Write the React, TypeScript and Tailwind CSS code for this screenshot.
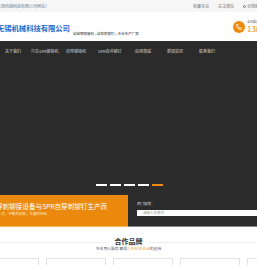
import { Phone } from "lucide-react"

const navItems = ["关于我们", "汽车SPR铆接机", "自穿铆接机", "SPR自冲铆钉", "应用领域", "新闻资讯", "联系我们"]

export default function App() {
  return (
    <div className="w-[257px] h-[265px] overflow-hidden bg-white font-['Noto_Sans_CJK_SC',sans-serif]">
      {/* top bar */}
      <div className="h-[12px] bg-[#f6f6f6] flex items-center justify-between text-[4px] leading-none text-[#777] whitespace-nowrap">
        <span className="-ml-[3px]">无锡机械科技有限公司网站！</span>
        <div className="flex items-center gap-[9px] -mr-[14px]">
          <span>收藏本站</span>
          <span>关注微信</span>
          <span className="flex items-center gap-[1px]">
            <span className="w-[3px] h-[3px] rounded-full border-[0.6px] border-[#777]" />
            全国服务热线
          </span>
        </div>
      </div>

      {/* header */}
      <div className="h-[29px] flex items-center justify-between whitespace-nowrap">
        <div className="flex items-end gap-[3px] pt-[3px]">
          <span className="-ml-[3px] text-[7.4px] leading-none font-bold text-[#1c68cc] tracking-[-0.1px]">无锡机械科技有限公司</span>
          <span className="text-[3.5px] leading-none text-[#333] mb-[-4px]">自营钢铆接机—自穿刺铆钉—专业生产厂家</span>
        </div>
        <div className="flex items-center gap-[2px] -mr-[8px]">
          <div className="w-[12px] h-[12px] rounded-full bg-[#ee8a0c] flex items-center justify-center">
            <Phone className="w-[6px] h-[6px] text-white" strokeWidth={3} />
          </div>
          <div className="flex flex-col">
            <span className="text-[3px] leading-none text-[#666]">全国服务热线</span>
            <span className="text-[8px] leading-[9px] text-[#ee8a0c]">1380</span>
          </div>
        </div>
      </div>

      {/* nav + banner */}
      <div className="bg-[#2b2b2b]">
        <div className="h-[19px] flex items-center text-[4px] leading-none text-[#d8d8d8] whitespace-nowrap pl-[5px]">
          {navItems.map((item, i) => (
            <span
              key={item}
              className={
                i === 0 ? "w-[26px]" : i === 1 ? "w-[35px]" : i === 2 ? "w-[32px]" : i === 3 ? "w-[37px]" : "w-[32px]"
              }
            >
              {item}
            </span>
          ))}
        </div>
        <div className="h-[135px] bg-[#2c2c2c] flex items-end justify-center pb-[9px] pl-[1px]">
          <div className="flex gap-[3px]">
            <span className="w-[11px] h-[2px] bg-white" />
            <span className="w-[11px] h-[2px] bg-white" />
            <span className="w-[11px] h-[2px] bg-white" />
            <span className="w-[11px] h-[2px] bg-white" />
            <span className="w-[11px] h-[2px] bg-[#ee8a0c]" />
          </div>
        </div>
        <div className="h-[31px] flex bg-[#2b2b2b]">
          <div className="w-[128px] bg-[#ea890c] text-white whitespace-nowrap overflow-hidden flex flex-col pt-[7px]">
            <span className="-ml-[4px] text-[6.6px] leading-[9px]">穿刺铆接设备与SPR自穿刺铆钉生产商</span>
            <span className="-ml-[2px] text-[3.5px] leading-[5px] text-[#fde7c8]">人员，不断的创新，丰富的经验</span>
          </div>
          <div className="flex-1 pl-[9px] pt-[7px] flex flex-col">
            <span className="text-[3.5px] leading-none text-[#ddd]">热门搜索：</span>
            <div className="mt-[4px] h-[6px] bg-white flex items-center pl-[6px] text-[3.5px] leading-none text-[#999]">请输入关键词</div>
          </div>
        </div>
      </div>
      <div className="h-[1px] flex">
        <div className="w-[128px] bg-[#f3b55a]" />
        <div className="flex-1 bg-[#8a8a8a]" />
      </div>

      {/* partner brands */}
      <div className="relative h-[31px] flex flex-col items-center pt-[10px]">
        <div className="absolute left-0 right-0 top-[15px] h-[1px] bg-[#efefef]" />
        <span className="relative bg-white px-[6px] text-[7px] leading-[9px] font-bold text-[#333]">合作品牌</span>
        <span className="mt-[1px] text-[3.8px] leading-none text-[#555] whitespace-nowrap">
          多年用心服务 赢得<span className="text-[#e9a03a]">众多知名企业</span>的支持
        </span>
      </div>
      <div className="flex gap-[7px] -ml-[21px]">
        {[0, 1, 2, 3, 4].map((i) => (
          <div key={i} className="w-[60px] h-[12px] shrink-0 border border-[#e2e2e2] bg-white" />
        ))}
      </div>
    </div>
  )
}
